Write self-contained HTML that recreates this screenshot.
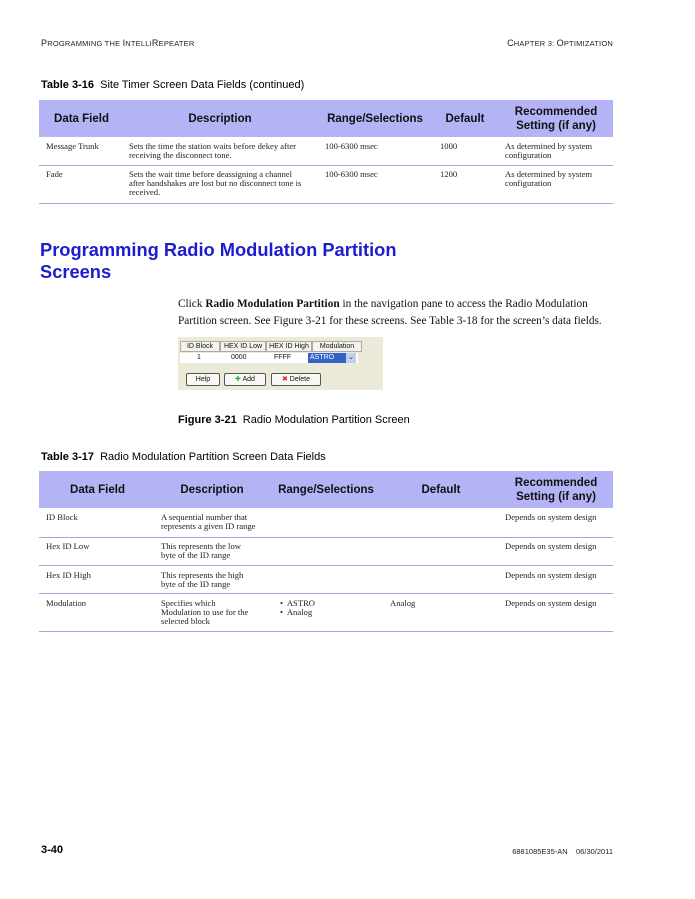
<!DOCTYPE html>
<html><head><style>
body{margin:0;width:695px;height:899px;background:#fff;position:relative;font-family:"Liberation Sans",sans-serif;overflow:hidden}
.a{position:absolute;white-space:nowrap}
.sc{font-size:7.5px;letter-spacing:.2px;color:#222}
.sc b{font-weight:normal;font-size:9px}
.cap{font-size:11px;color:#000}
.hd{position:absolute;background:#b3b3f5;height:37px;left:39px;width:574px}
.h{position:absolute;font-weight:bold;font-size:11.5px;text-align:center;line-height:14px;color:#111}
.s{position:absolute;font-family:"Liberation Serif",serif;font-size:8.6px;line-height:9px;color:#222;white-space:nowrap}
.ln{position:absolute;left:39px;width:574px;height:1px;background:#a5a5e5}
</style></head><body>
<div class="a sc" style="left:41px;top:38px"><b>P</b>ROGRAMMING THE <b>I</b>NTELLI<b>R</b>EPEATER</div>
<div class="a sc" style="right:82px;top:38px"><b>C</b>HAPTER 3: <b>O</b>PTIMIZATION</div>

<div class="a cap" style="left:41px;top:79px"><b>Table 3-16</b>&nbsp; Site Timer Screen Data Fields (continued)</div>
<div class="hd" style="top:100px"></div>
<div class="h" style="left:39px;width:85px;top:112px">Data Field</div>
<div class="h" style="left:130px;width:180px;top:112px">Description</div>
<div class="h" style="left:320px;width:110px;top:112px">Range/Selections</div>
<div class="h" style="left:435px;width:60px;top:112px">Default</div>
<div class="h" style="left:500px;width:112px;top:105px">Recommended<br>Setting (if any)</div>
<div class="s" style="left:46px;top:142px">Message Trunk</div>
<div class="s" style="left:129px;top:142px">Sets the time the station waits before dekey after<br>receiving the disconnect tone.</div>
<div class="s" style="left:325px;top:142px">100-6300 msec</div>
<div class="s" style="left:440px;top:142px">1000</div>
<div class="s" style="left:505px;top:142px">As determined by system<br>configuration</div>
<div class="ln" style="top:165px"></div>
<div class="s" style="left:46px;top:170px">Fade</div>
<div class="s" style="left:129px;top:170px">Sets the wait time before deassigning a channel<br>after handshakes are lost but no disconnect tone is<br>received.</div>
<div class="s" style="left:325px;top:170px">100-6300 msec</div>
<div class="s" style="left:440px;top:170px">1200</div>
<div class="s" style="left:505px;top:170px">As determined by system<br>configuration</div>
<div class="ln" style="top:203px"></div>

<div class="a" style="left:40px;top:239px;font-size:18.3px;font-weight:bold;color:#1c1cd0;line-height:22px">Programming Radio Modulation Partition<br>Screens</div>

<div class="a" style="left:178px;top:296px;font-family:'Liberation Serif',serif;font-size:11.3px;line-height:17px;color:#111">Click <b>Radio Modulation Partition</b> in the navigation pane to access the Radio Modulation<br>Partition screen. See Figure 3-21 for these screens. See Table 3-18 for the screen’s data fields.</div>

<div class="a" style="left:178px;top:337px;width:205px;height:53px;background:#ece9d8;font-size:7px;color:#111">
 <div class="a" style="left:2px;top:4px;width:186px;height:11px;display:flex">
  <div style="width:38px;border:1px solid #aaa;background:#f4f3ee;text-align:center;line-height:10px">ID Block</div>
  <div style="width:44px;border:1px solid #aaa;background:#f4f3ee;text-align:center;line-height:10px">HEX ID Low</div>
  <div style="width:44px;border:1px solid #aaa;background:#f4f3ee;text-align:center;line-height:10px">HEX ID High</div>
  <div style="width:48px;border:1px solid #aaa;background:#f4f3ee;text-align:center;line-height:10px">Modulation</div>
 </div>
 <div class="a" style="left:2px;top:16px;width:178px;height:10px;background:#fff"></div>
 <div class="a" style="left:19px;top:17px">1</div>
 <div class="a" style="left:53px;top:17px">0000</div>
 <div class="a" style="left:96px;top:17px">FFFF</div>
 <div class="a" style="left:130px;top:16px;width:36px;height:10px;background:#3163c8;color:#fff;line-height:10px;padding-left:2px">ASTRO</div>
 <div class="a" style="left:168px;top:16px;width:10px;height:10px;background:#c0d0f0;color:#235;text-align:center;line-height:10px">&#8964;</div>
 <div class="a" style="left:8px;top:36px;width:32px;height:11px;border:1px solid #555;border-radius:2px;background:#f8f8f4;text-align:center;line-height:11px">Help</div>
 <div class="a" style="left:46px;top:36px;width:40px;height:11px;border:1px solid #555;border-radius:2px;background:#f8f8f4;text-align:center;line-height:11px"><span style="color:#3a3">&#10010;</span> Add</div>
 <div class="a" style="left:93px;top:36px;width:48px;height:11px;border:1px solid #555;border-radius:2px;background:#f8f8f4;text-align:center;line-height:11px"><span style="color:#d22">&#10006;</span> Delete</div>
</div>

<div class="a cap" style="left:178px;top:414px"><b>Figure 3-21</b>&nbsp; Radio Modulation Partition Screen</div>
<div class="a cap" style="left:41px;top:451px"><b>Table 3-17</b>&nbsp; Radio Modulation Partition Screen Data Fields</div>

<div class="hd" style="top:471px"></div>
<div class="h" style="left:55px;width:85px;top:483px">Data Field</div>
<div class="h" style="left:152px;width:120px;top:483px">Description</div>
<div class="h" style="left:270px;width:112px;top:483px">Range/Selections</div>
<div class="h" style="left:410px;width:62px;top:483px">Default</div>
<div class="h" style="left:500px;width:112px;top:476px">Recommended<br>Setting (if any)</div>
<div class="s" style="left:46px;top:513px">ID Block</div>
<div class="s" style="left:161px;top:513px">A sequential number that<br>represents a given ID range</div>
<div class="s" style="left:505px;top:513px">Depends on system design</div>
<div class="ln" style="top:537px"></div>
<div class="s" style="left:46px;top:542px">Hex ID Low</div>
<div class="s" style="left:161px;top:542px">This represents the low<br>byte of the ID range</div>
<div class="s" style="left:505px;top:542px">Depends on system design</div>
<div class="ln" style="top:565px"></div>
<div class="s" style="left:46px;top:571px">Hex ID High</div>
<div class="s" style="left:161px;top:571px">This represents the high<br>byte of the ID range</div>
<div class="s" style="left:505px;top:571px">Depends on system design</div>
<div class="ln" style="top:593px"></div>
<div class="s" style="left:46px;top:599px">Modulation</div>
<div class="s" style="left:161px;top:599px">Specifies which<br>Modulation to use for the<br>selected block</div>
<div class="s" style="left:280px;top:599px">•&nbsp; ASTRO<br>•&nbsp; Analog</div>
<div class="s" style="left:390px;top:599px">Analog</div>
<div class="s" style="left:505px;top:599px">Depends on system design</div>
<div class="ln" style="top:631px"></div>

<div class="a" style="left:41px;top:844px;font-weight:bold;font-size:11px">3-40</div>
<div class="a" style="right:82px;top:847px;font-size:7.5px;color:#222">6881085E35-AN&nbsp;&nbsp;&nbsp; 06/30/2011</div>
</body></html>
